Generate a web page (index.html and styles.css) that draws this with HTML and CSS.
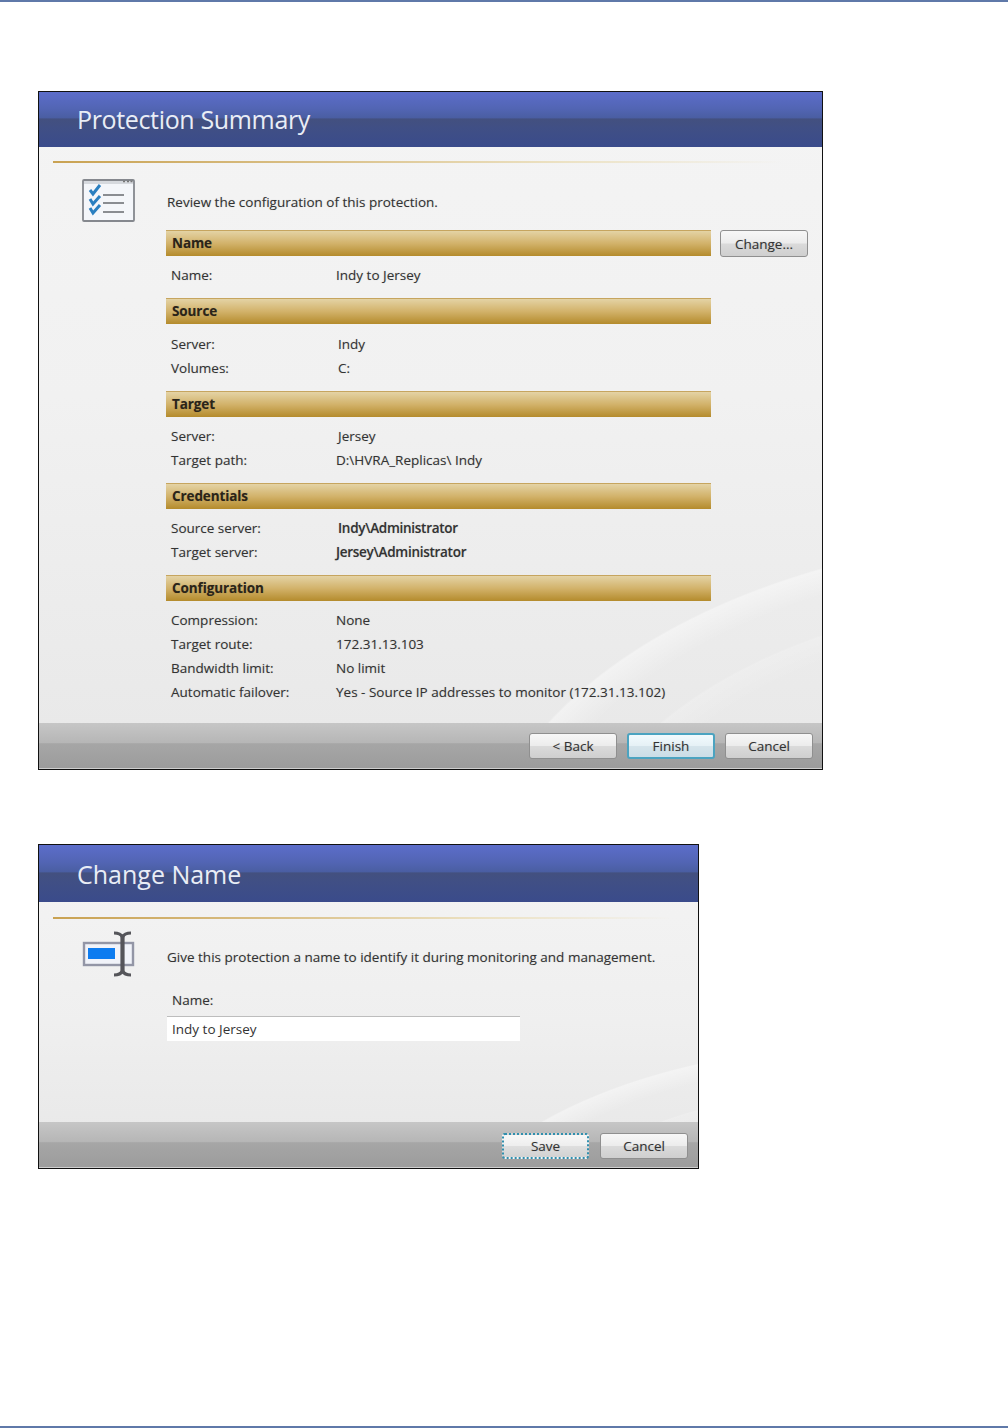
FILE: index.html
```html
<!DOCTYPE html>
<html lang="en">
<head>
<meta charset="utf-8">
<title>Protection Summary</title>
<link rel="stylesheet" href="styles.css">
</head>
<body>
<div class="page">
  <section class="dialog dialog-summary">
    <header class="dialog-header header-summary"><h1>Protection Summary</h1></header>
    <div class="dialog-body">
      <div class="rule"></div>
      <div class="content">
        <svg class="icon icon-list" width="54" height="44" viewBox="0 0 54 44">
          <defs>
            <filter id="soft-list" x="-10%" y="-10%" width="120%" height="120%"><feGaussianBlur stdDeviation="0.35"/></filter>
          </defs>
          <g filter="url(#soft-list)">
            <rect x="1" y="1" width="51" height="41" rx="1" fill="#f4f6fa" stroke="#85888e" stroke-width="1.800"/>
            <rect x="2" y="2" width="49" height="3" fill="#d6d9de"/>
            <path d="M41 2.500h2M45 2.500h2M48.500 2.500h2" stroke="#777" stroke-width="1.400"/>
            <path d="M8 11l3 4 7-9M8 20l3 5 7-8M8 29l3 5 7-8" fill="none" stroke="#2b7fc0" stroke-width="3"/>
            <path d="M21 16h21M21 24h21M21 33h21" stroke="#8a8d92" stroke-width="2.200"/>
          </g>
        </svg>
        <div class="main">
          <p class="intro intro-summary">Review the configuration of this protection.</p>
          <div class="section section-first">
            <div class="section-head">
              <h2 class="bar">Name</h2>
              <button class="btn btn-change" type="button">Change...</button>
            </div>
            <dl class="rows">
              <dt>Name:</dt><dd>Indy to Jersey</dd>
            </dl>
          </div>
          <div class="section section-source">
            <h2 class="bar">Source</h2>
            <dl class="rows">
              <dt>Server:</dt><dd class="nudge">Indy</dd>
              <dt>Volumes:</dt><dd class="nudge">C:</dd>
            </dl>
          </div>
          <div class="section">
            <h2 class="bar">Target</h2>
            <dl class="rows">
              <dt>Server:</dt><dd class="nudge">Jersey</dd>
              <dt>Target path:</dt><dd>D:\HVRA_Replicas\ Indy</dd>
            </dl>
          </div>
          <div class="section">
            <h2 class="bar">Credentials</h2>
            <dl class="rows">
              <dt>Source server:</dt><dd class="nudge strong">Indy\Administrator</dd>
              <dt>Target server:</dt><dd class="strong">Jersey\Administrator</dd>
            </dl>
          </div>
          <div class="section">
            <h2 class="bar">Configuration</h2>
            <dl class="rows">
              <dt>Compression:</dt><dd>None</dd>
              <dt>Target route:</dt><dd>172.31.13.103</dd>
              <dt>Bandwidth limit:</dt><dd>No limit</dd>
              <dt>Automatic failover:</dt><dd>Yes - Source IP addresses to monitor (172.31.13.102)</dd>
            </dl>
          </div>
        </div>
      </div>
    </div>
    <footer class="dialog-footer">
      <button class="btn" type="button">&lt; Back</button>
      <button class="btn btn-default" type="button">Finish</button>
      <button class="btn" type="button">Cancel</button>
    </footer>
  </section>

  <section class="dialog dialog-name">
    <header class="dialog-header header-name"><h1>Change Name</h1></header>
    <div class="dialog-body body-name">
      <div class="rule"></div>
      <div class="content">
        <svg class="icon icon-field" width="56" height="48" viewBox="0 0 56 48">
          <defs>
            <filter id="soft-field" x="-10%" y="-10%" width="120%" height="120%"><feGaussianBlur stdDeviation="0.45"/></filter>
          </defs>
          <g filter="url(#soft-field)">
            <rect x="2" y="12" width="49" height="22" fill="#f1f3f9" stroke="#9396a6" stroke-width="2.400"/>
            <rect x="6" y="17" width="27" height="11" fill="#0a7cf0"/>
            <g fill="none" stroke="#54555a">
              <path d="M32 2c5 0 7 1 8.500 4 1.500-3 3.500-4 8.500-4M32 44c5 0 7-1 8.500-4 1.500 3 3.500 4 8.500 4" stroke-width="3.200"/>
              <path d="M40.500 5v36" stroke-width="4.200"/>
            </g>
          </g>
        </svg>
        <div class="main">
          <p class="intro intro-name">Give this protection a name to identify it during monitoring and management.</p>
          <label class="field-label" for="name">Name:</label>
          <input class="field" id="name" type="text" value="Indy to Jersey">
        </div>
      </div>
    </div>
    <footer class="dialog-footer footer-name">
      <button class="btn btn-save" type="button">Save</button>
      <button class="btn" type="button">Cancel</button>
    </footer>
  </section>
</div>
</body>
</html>
```

FILE: styles.css
```css
* { box-sizing: border-box; }

html, body {
  margin: 0;
  height: 100%;
  background: #fff;
}

.page {
  height: 1428px;
  padding: 89px 0 0 38px;
  border-top: 2px solid #5f79a9;
  border-bottom: 2px solid #5f79a9;
  font-family: "Open Sans", "Noto Sans", sans-serif;
  font-size: 13.500px;
  color: #333;
  text-shadow: 0 0 1px rgba(70, 70, 70, .3);
}

.dialog {
  display: flex;
  flex-direction: column;
  border: 1px solid #111;
}

.dialog-summary {
  width: 785px;
  height: 679px;
  background:
    radial-gradient(ellipse 614px 360px at 1050px 800px, rgba(255,255,255,0) 93%, rgba(255,255,255,.4) 99.600%, rgba(255,255,255,0) 100%),
    radial-gradient(ellipse 520px 300px at 1050px 800px, rgba(255,255,255,0) 92%, rgba(255,255,255,.18) 99.500%, rgba(255,255,255,0) 100%),
    linear-gradient(#f4f4f4 0, #f1f1f1 45%, #e8e8e8 100%);
}

.dialog-name {
  width: 661px;
  height: 325px;
  margin-top: 74px;
  background:
    radial-gradient(ellipse 456px 222px at 850px 420px, rgba(255,255,255,0) 92%, rgba(255,255,255,.4) 99.500%, rgba(255,255,255,0) 100%),
    radial-gradient(ellipse 380px 180px at 850px 420px, rgba(255,255,255,0) 90%, rgba(255,255,255,.18) 99.500%, rgba(255,255,255,0) 100%),
    linear-gradient(#f4f4f4 0, #efefef 55%, #e7e7e7 100%);
}

.dialog-header {
  flex: none;
  display: flex;
  align-items: center;
  padding-left: 38px;
  text-shadow: none;
  background: linear-gradient(#5c6dca 0, #5265b4 30%, #4a5ea2 47%, #43507f 49%, #404f85 65%, #3a4b8b 100%);
}
.header-summary { height: 55px; padding-bottom: 2px; }
.header-name { height: 57px; }

.dialog-header h1 {
  margin: 0;
  font-size: 25px;
  font-weight: 400;
  color: #e9edf6;
}
.header-summary h1 { letter-spacing: -0.350px; }

.dialog-body { flex: 1; padding: 14px 0 0 14px; }
.body-name { padding-top: 15px; }

.rule {
  height: 2px;
  width: 730px;
  max-width: 96%;
  background: linear-gradient(90deg, #c9a252 0, #d9bf86 35%, #ece2c4 70%, rgba(241,241,241,0) 100%);
}

.content {
  display: grid;
  grid-template-columns: 113px 1fr;
  align-items: start;
}

.icon { display: block; margin: 16px 0 0 29px; }
.icon-field { margin-top: 12px; }

.intro { margin: 0; line-height: 20px; white-space: nowrap; padding-left: 1px; }
.intro-summary { padding-top: 29px; margin-bottom: 18px; }
.intro-name { padding-top: 28px; margin-bottom: 23px; }

.section { padding-bottom: 11px; width: 545px; }
.section-first { width: 643px; }

.section-head { display: flex; gap: 9px; align-items: flex-start; height: 26px; }
.section-head .bar { width: 545px; flex: none; }

.bar {
  margin: 0;
  height: 26px;
  padding-left: 6px;
  line-height: 25px;
  font-size: 13.500px;
  font-weight: 700;
  letter-spacing: -0.100px;
  color: #2a2418;
  border-top: 1px solid #c6a55f;
  background: linear-gradient(#e4d3a5 0, #d2b26a 50%, #b48b2c 100%);
}

.rows {
  margin: 7px 0 0;
  display: grid;
  grid-template-columns: 165px 1fr;
  grid-auto-rows: 24px;
  line-height: 24px;
  padding-left: 5px;
}
.section-source .rows { margin-top: 8px; }
.rows dt, .rows dd { margin: 0; white-space: nowrap; }
.rows .nudge { padding-left: 2px; }
.rows .strong { font-weight: 600; letter-spacing: -0.280px; }

.field-label { display: block; padding-left: 6px; line-height: 20px; }

.field {
  display: block;
  margin: 6px 0 0 1px;
  width: 353px;
  height: 25px;
  padding: 0 5px;
  border: 0;
  border-top: 1px solid #bdbdbd;
  background: #fff;
  font: inherit;
  color: inherit;
}

.dialog-footer {
  flex: none;
  height: 46px;
  display: flex;
  justify-content: flex-end;
  gap: 10px;
  padding: 10px 9px 0 0;
  border-bottom: 1px solid #cfcfcf;
  background: linear-gradient(#c6c6c6 0, #b6b6b6 44%, #a6a6a6 46%, #9c9c9c 100%);
}
.footer-name { padding: 11px 10px 0 0; gap: 11px; }

.btn {
  width: 88px;
  height: 26px;
  padding: 0;
  border: 1px solid #8f8f8f;
  border-radius: 3px;
  background: linear-gradient(#f7f7f7 0, #ececec 48%, #dadada 52%, #cfcfcf 100%);
  font: inherit;
  color: #333;
  text-shadow: inherit;
}
.btn-change { height: 27px; flex: none; }
.btn-default { border: 2px solid #4ba3c0; background: linear-gradient(#f2fafd 0, #e6f1f6 48%, #d5e4eb 52%, #cbdde6 100%); }
.btn-save {
  width: 87px;
  border: 2px dotted #2f8fae;
  background: linear-gradient(#f7f7f7 0, #eeeeee 48%, #dedede 52%, #d2d2d2 100%);
}
```
